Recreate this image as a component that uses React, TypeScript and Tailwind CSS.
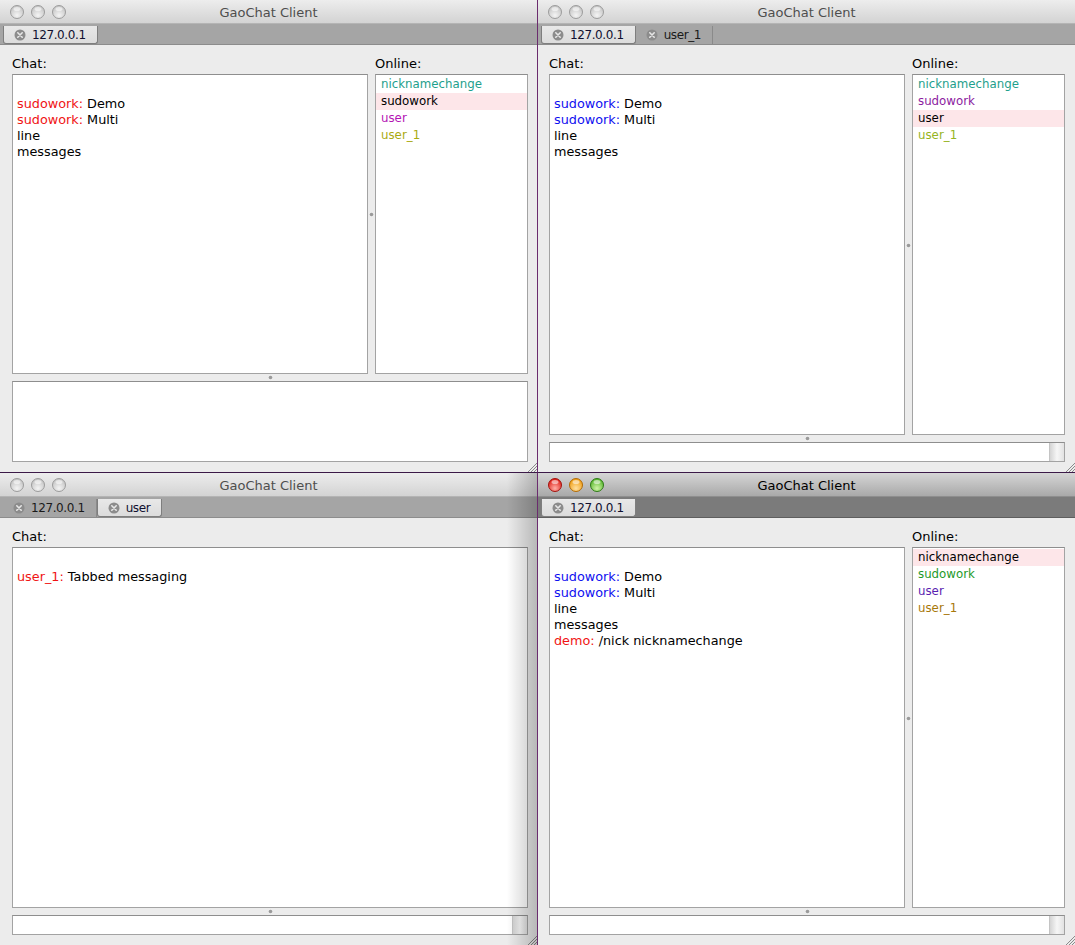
import React from 'react';

type Line = { name?: string; color?: string; text: string };
type Person = { name: string; color: string; selected?: boolean };
type Tab = { label: string; selected?: boolean };

const font = { fontFamily: '"DejaVu Sans", Verdana, sans-serif' };

const CloseIcon = () => (
  <svg width="12" height="12" viewBox="0 0 12 12" className="shrink-0">
    <circle cx="6" cy="6" r="5.5" fill="#8c8c8c" />
    <path d="M3.8 3.8 L8.2 8.2 M8.2 3.8 L3.8 8.2" stroke="#e6e6e6" strokeWidth="1.6" strokeLinecap="round" />
  </svg>
);

const Lights = ({ active }: { active: boolean }) => {
  const colors = active
    ? [
        ['#ffb0a8', '#e0241c', '#a01410'],
        ['#ffe0a0', '#f0a018', '#b06a08'],
        ['#d0f4a8', '#5cb830', '#2f7a18'],
      ]
    : [
        ['#f4f4f4', '#c6c6c6', '#9c9c9c'],
        ['#f4f4f4', '#c6c6c6', '#9c9c9c'],
        ['#f4f4f4', '#c6c6c6', '#9c9c9c'],
      ];
  return (
    <div className="flex gap-[7px] pl-[10px]">
      {colors.map((c, i) => (
        <svg key={i} width="14" height="14" viewBox="0 0 14 14">
          <defs>
            <radialGradient id={`g${active ? 'a' : 'i'}${i}`} cx="50%" cy="75%" r="65%">
              <stop offset="0%" stopColor={c[0]} />
              <stop offset="100%" stopColor={c[1]} />
            </radialGradient>
          </defs>
          <circle cx="7" cy="7" r="6.5" fill={`url(#g${active ? 'a' : 'i'}${i})`} stroke={c[2]} strokeWidth="1" />
          <ellipse cx="7" cy="4" rx="3.5" ry="2" fill="#ffffff" opacity="0.55" />
        </svg>
      ))}
    </div>
  );
};

const Grip = () => (
  <svg width="10" height="10" viewBox="0 0 10 10">
    <path d="M1 10 L10 1 M4 10 L10 4 M7 10 L10 7" stroke="#8a8a8a" strokeWidth="1" />
  </svg>
);

const Dimple = () => (
  <svg width="5" height="5" viewBox="0 0 5 5">
    <circle cx="2.5" cy="2.5" r="1.8" fill="#9a9a9a" />
  </svg>
);

const Window = ({
  tabs,
  lines,
  people,
  active = false,
  bigInput = false,
  leftBorder = false,
  topBorder = false,
  shadow = false,
}: {
  tabs: Tab[];
  lines: Line[];
  people?: Person[];
  active?: boolean;
  bigInput?: boolean;
  leftBorder?: boolean;
  topBorder?: boolean;
  shadow?: boolean;
}) => (
  <div
    className={`relative flex flex-col bg-[#ececec] overflow-hidden ${leftBorder ? 'border-l border-l-[#6b2c6e]' : ''} ${
      topBorder ? 'border-t border-t-[#3c1a48]' : ''
    }`}
    style={font}
  >
    <div
      className={`relative flex items-center h-[23px] ${
        active ? 'bg-gradient-to-b from-[#d6d6d6] to-[#a9a9a9]' : 'bg-gradient-to-b from-[#ededed] to-[#d3d3d3]'
      }`}
    >
      <Lights active={active} />
      <div
        className={`absolute inset-0 flex items-center justify-center pt-[2px] text-[13px] ${active ? 'text-black' : 'text-[#4e4e4e]'}`}
      >
        GaoChat Client
      </div>
    </div>
    <div
      className={`flex items-start h-[22px] px-[3px] pt-[2px] border-t border-b ${
        active ? 'bg-[#7b7b7b] border-t-[#8e8e8e] border-b-[#5e5e5e]' : 'bg-[#a5a5a5] border-t-[#b4b4b4] border-b-[#8c8c8c]'
      }`}
    >
      {tabs.map((t, i) => (
        <div
          key={i}
          className={`flex items-center gap-[6px] h-[18px] pl-[10px] pr-[11px] text-[12px] tracking-[-0.4px] ${
            t.selected
              ? 'bg-gradient-to-b from-[#e8e8e8] to-[#dcdcdc] border border-t-0 border-[#7e7e7e] rounded-b-[3px] text-[#101030]'
              : 'border-r border-[#8a8a8a] text-[#1a1a1a]'
          }`}
        >
          <CloseIcon />
          <span>{t.label}</span>
        </div>
      ))}
    </div>
    <div className={`flex-1 flex flex-col pt-[10px] pb-[10px] min-h-0 ${leftBorder ? 'pl-[11px] pr-[10px]' : 'pl-[12px] pr-[9px]'}`}>
      <div className="flex-1 flex min-h-0">
        <div className="flex-1 flex flex-col min-w-0">
          <div className="text-[13px] h-[17px] leading-[17px] mb-[2px] text-black">Chat:</div>
          <div className="flex-1 bg-white border border-[#a3a3a3] border-t-[#8e8e8e] pl-[4px] pt-[5px] text-[12.8px] leading-[16px]">
            <div className="h-[16px]" />
            {lines.map((l, i) => (
              <div key={i} className="whitespace-nowrap text-black">
                {l.name && <span style={{ color: l.color }}>{l.name}: </span>}
                {l.text}
              </div>
            ))}
          </div>
        </div>
        {people && (
          <>
            <div className="w-[7px] flex items-center justify-center">
              <Dimple />
            </div>
            <div className="w-[153px] flex flex-col">
              <div className="text-[13px] h-[17px] leading-[17px] mb-[2px] text-black">Online:</div>
              <div className="flex-1 bg-white border border-[#a3a3a3] border-t-[#8e8e8e] pt-px text-[11.8px] leading-[17px]">
                {people.map((p, i) => (
                  <div
                    key={i}
                    className={`pl-[5px] ${p.selected ? 'bg-[#fde6e9] text-black' : ''}`}
                    style={p.selected ? undefined : { color: p.color }}
                  >
                    {p.name}
                  </div>
                ))}
              </div>
            </div>
          </>
        )}
      </div>
      <div className="h-[7px] flex items-center justify-center">
        <Dimple />
      </div>
      {bigInput ? (
        <div className="h-[81px] bg-white border border-[#a3a3a3] border-t-[#8e8e8e]" />
      ) : (
        <div className="h-[20px] flex bg-white border border-[#a3a3a3] border-t-[#8e8e8e]">
          <div className="flex-1" />
          <div className="w-[15px] bg-gradient-to-r from-[#d4d4d4] via-[#f6f6f6] to-[#e2e2e2] border-l border-[#c4c4c4]" />
        </div>
      )}
    </div>
    <div className="absolute right-0 bottom-0">
      <Grip />
    </div>
    {shadow && (
      <div className="absolute right-0 top-0 bottom-0 w-[30px] bg-gradient-to-r from-transparent to-[rgba(0,0,0,0.22)] pointer-events-none" />
    )}
  </div>
);

const demo: Line[] = [
  { name: 'sudowork', text: 'Demo' },
  { name: 'sudowork', text: 'Multi' },
  { text: 'line' },
  { text: 'messages' },
];

export default function App() {
  const red = '#f01414';
  const blue = '#1010f0';
  return (
    <div className="grid grid-cols-[537px_538px] grid-rows-[472px_473px] w-[1075px] h-[945px] bg-[#5a2060]">
      <Window
        tabs={[{ label: '127.0.0.1', selected: true }]}
        lines={demo.map((l) => ({ ...l, color: red }))}
        bigInput
        people={[
          { name: 'nicknamechange', color: '#1ea08c' },
          { name: 'sudowork', color: '#000', selected: true },
          { name: 'user', color: '#b414b4' },
          { name: 'user_1', color: '#aaaa10' },
        ]}
      />
      <Window
        leftBorder
        tabs={[{ label: '127.0.0.1', selected: true }, { label: 'user_1' }]}
        lines={demo.map((l) => ({ ...l, color: blue }))}
        people={[
          { name: 'nicknamechange', color: '#1ea08c' },
          { name: 'sudowork', color: '#8c1ca0' },
          { name: 'user', color: '#000', selected: true },
          { name: 'user_1', color: '#96b41e' },
        ]}
      />
      <Window
        topBorder
        shadow
        tabs={[{ label: '127.0.0.1' }, { label: 'user', selected: true }]}
        lines={[{ name: 'user_1', color: red, text: 'Tabbed messaging' }]}
      />
      <Window
        active
        leftBorder
        topBorder
        tabs={[{ label: '127.0.0.1', selected: true }]}
        lines={[...demo.map((l) => ({ ...l, color: blue })), { name: 'demo', color: red, text: '/nick nicknamechange' }]}
        people={[
          { name: 'nicknamechange', color: '#000', selected: true },
          { name: 'sudowork', color: '#1e9a2a' },
          { name: 'user', color: '#5a1eb0' },
          { name: 'user_1', color: '#a8780a' },
        ]}
      />
    </div>
  );
}
